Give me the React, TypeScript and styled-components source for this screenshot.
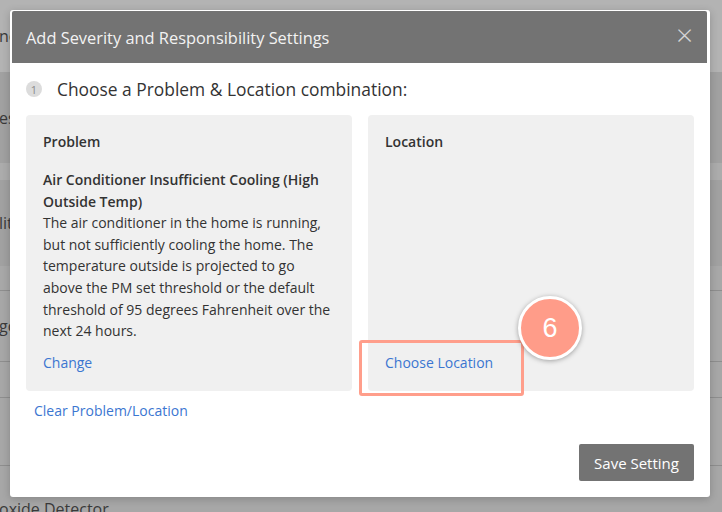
import React from "react";
import styled, { createGlobalStyle } from "styled-components";

const Global = createGlobalStyle`
  html, body { margin: 0; padding: 0; }
  body {
    width: 722px; height: 512px; overflow: hidden;
    font-family: "Open Sans", "Noto Sans", sans-serif;
    background: #a7a7a7;
  }
`;

const Page = styled.div`
  position: relative;
  width: 722px;
  height: 512px;
  overflow: hidden;
  display: flex;
  flex-direction: column;
`;

const BgRow = styled.div<{ $h: number; $tone: string; $line?: boolean; $bottom?: boolean }>`
  height: ${(p) => p.$h}px;
  background: ${(p) => p.$tone};
  border-bottom: ${(p) => (p.$line ? "1px solid #8e8e8e" : "none")};
  box-sizing: border-box;
  display: flex;
  align-items: ${(p) => (p.$bottom ? "flex-end" : "center")};
  font-size: 16px;
  line-height: 18px;
  color: #3a3a3a;
  white-space: nowrap;
  flex-shrink: 0;
  overflow: hidden;
`;

const BgText = styled.span<{ $shift: number; $drop?: number }>`
  margin-left: ${(p) => p.$shift}px;
  margin-bottom: ${(p) => -(p.$drop ?? 0)}px;
`;

const Modal = styled.div`
  position: absolute;
  left: 10px;
  top: 10px;
  width: 700px;
  height: 487px;
  background: #fff;
  border-radius: 3px;
  box-shadow: 0 2px 8px rgba(0, 0, 0, 0.2);
  display: flex;
  flex-direction: column;
  padding: 1px 3px 0 2px;
  box-sizing: border-box;
`;

const Header = styled.div`
  height: 52px;
  background: #737373;
  border-radius: 2px 2px 0 0;
  display: flex;
  align-items: center;
  justify-content: space-between;
  padding: 0 14px 0 14px;
  color: #f2f2f2;
  font-size: 16.4px;
`;

const Close = styled.span`
  font-size: 30px;
  font-weight: 300;
  color: #d6d6d6;
  line-height: 1;
  margin-top: -4px;
`;

const Body = styled.div`
  flex: 1;
  display: flex;
  flex-direction: column;
  padding: 15px 13px 0 14px;
`;

const StepRow = styled.div`
  display: flex;
  align-items: center;
  gap: 15px;
  height: 22px;
`;

const StepNum = styled.span`
  width: 16px;
  height: 16px;
  border-radius: 50%;
  background: #dcdcdc;
  color: #8a8a8a;
  font-size: 11px;
  display: flex;
  align-items: center;
  justify-content: center;
`;

const StepTitle = styled.span`
  font-size: 17.4px;
  font-weight: 500;
  color: #333;
`;

const Cards = styled.div`
  display: grid;
  grid-template-columns: 326px 326px;
  gap: 16px;
  margin-top: 15px;
`;

const Card = styled.div`
  height: 276px;
  background: #f0f0f0;
  border-radius: 4px;
  padding: 17px 17px 17px 17px;
  box-sizing: border-box;
  display: flex;
  flex-direction: column;
  font-size: 14px;
  color: #333;
  position: relative;
`;

const CardLabel = styled.div`
  font-weight: 600;
  line-height: 20px;
  margin-bottom: 17px;
`;

const ProblemTitle = styled.div`
  font-weight: 600;
  line-height: 21.6px;
`;

const Desc = styled.div`
  line-height: 21.6px;
`;

const Link = styled.a`
  color: #3b76d1;
  text-decoration: none;
  font-size: 14px;
  cursor: pointer;
`;

const CardLink = styled(Link)`
  margin-top: auto;
  line-height: 20px;
  margin-bottom: 1px;
`;

const ClearLink = styled(Link)`
  margin-top: 10px;
  margin-left: 8px;
  line-height: 20px;
`;

const Footer = styled.div`
  margin-top: auto;
  display: flex;
  justify-content: flex-end;
  padding-bottom: 16px;
`;

const SaveButton = styled.button`
  width: 115px;
  height: 37px;
  background: #737373;
  color: #fff;
  border: none;
  border-radius: 2px;
  font-family: inherit;
  font-size: 15px;
`;

const Highlight = styled.div`
  position: absolute;
  left: -9px;
  bottom: -5px;
  width: 165px;
  height: 56px;
  border: 3px solid #ff9e8b;
  border-radius: 3px;
  box-sizing: border-box;
`;

const Badge = styled.div`
  position: absolute;
  left: 150px;
  top: 181px;
  width: 64px;
  height: 64px;
  border-radius: 50%;
  background: #ff9c89;
  border: 3px solid #fff;
  box-sizing: border-box;
  box-shadow: 0 1px 5px rgba(0, 0, 0, 0.35);
  color: #fff;
  font-family: "Liberation Sans", Arial, sans-serif;
  font-size: 27px;
  display: flex;
  align-items: center;
  justify-content: center;
`;

export default function App() {
  return (
    <>
      <Global />
      <Page>
        <BgRow $h={72} $tone="#b3b3b3"><BgText $shift={-1}>ne</BgText></BgRow>
        <BgRow $h={91} $tone="#a1a1a1"><BgText $shift={-1}>es</BgText></BgRow>
        <BgRow $h={17} $tone="#acacac" />
        <BgRow $h={86} $tone="#a1a1a1"><BgText $shift={-1}>lit</BgText></BgRow>
        <BgRow $h={25} $tone="#a8a8a8" $line />
        <BgRow $h={71} $tone="#a7a7a7" $line><BgText $shift={-1}>go</BgText></BgRow>
        <BgRow $h={36} $tone="#a7a7a7" $line />
        <BgRow $h={68} $tone="#a7a7a7" $line />
        <BgRow $h={46} $tone="#a7a7a7" $bottom><BgText $shift={-1} $drop={6}>oxide Detector</BgText></BgRow>
        <Modal>
          <Header>
            <span>Add Severity and Responsibility Settings</span>
            <Close>×</Close>
          </Header>
          <Body>
            <StepRow>
              <StepNum>1</StepNum>
              <StepTitle>Choose a Problem &amp; Location combination:</StepTitle>
            </StepRow>
            <Cards>
              <Card>
                <CardLabel>Problem</CardLabel>
                <ProblemTitle>Air Conditioner Insufficient Cooling (High Outside Temp)</ProblemTitle>
                <Desc>
                  The air conditioner in the home is running, but not sufficiently cooling the home. The
                  temperature outside is projected to go above the PM set threshold or the default
                  threshold of 95 degrees Fahrenheit over the next 24 hours.
                </Desc>
                <CardLink>Change</CardLink>
              </Card>
              <Card>
                <CardLabel>Location</CardLabel>
                <CardLink>Choose Location</CardLink>
                <Highlight />
                <Badge>6</Badge>
              </Card>
            </Cards>
            <ClearLink>Clear Problem/Location</ClearLink>
            <Footer>
              <SaveButton>Save Setting</SaveButton>
            </Footer>
          </Body>
        </Modal>
      </Page>
    </>
  );
}
